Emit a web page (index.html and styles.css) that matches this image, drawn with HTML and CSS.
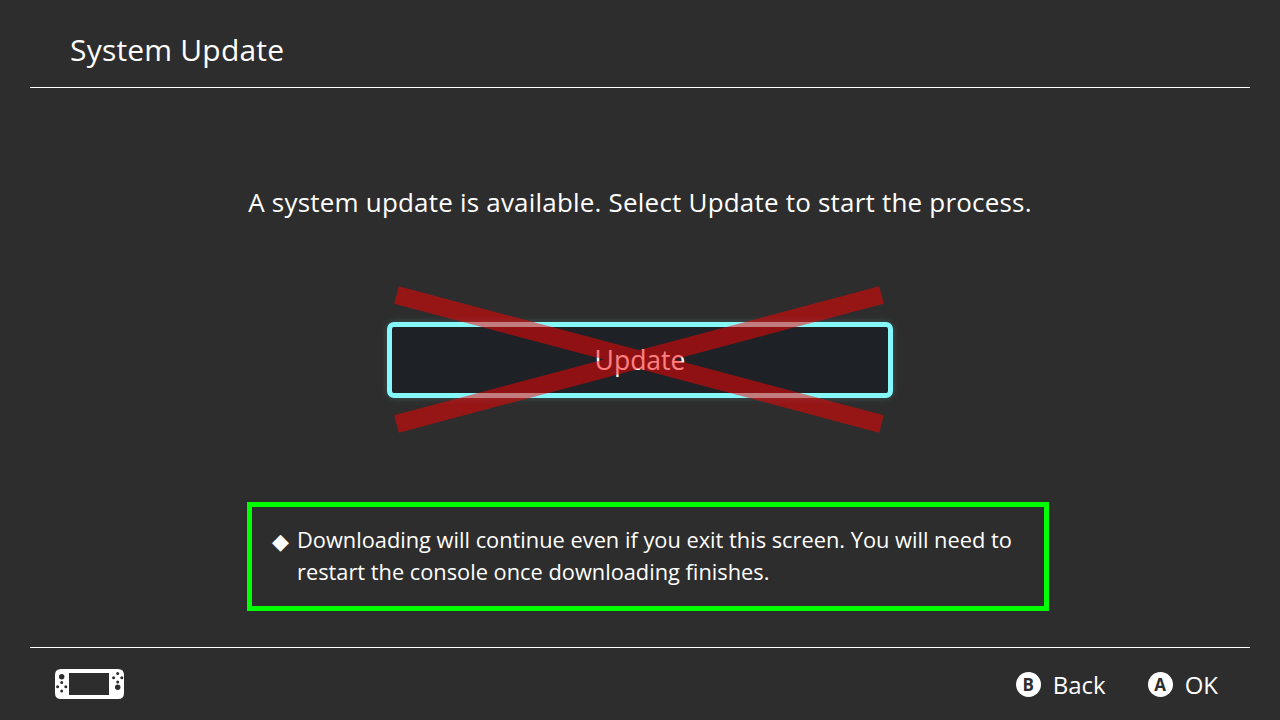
FILE: index.html
```html
<!DOCTYPE html>
<html lang="en">
<head>
    <meta charset="UTF-8">
    <meta name="viewport" content="width=device-width, initial-scale=1.0">
    <title>System Update</title>
    <link rel="stylesheet" href="styles.css">
</head>
<body>
    <header class="top-bar">
        <h1>System Update</h1>
    </header>

    <main class="content">
        <p class="message">A system update is available. Select Update to start the process.</p>

        <div class="button-wrap">
            <button class="update-btn">Update</button>
            <!-- crossed out marks, over the button -->
            <svg class="cross" width="490" height="147" viewBox="0 0 490 147">
                <path d="M2.5 9 L487.5 138 M487.5 9 L2.5 138"/>
            </svg>
        </div>

        <div class="notice">
            <span class="bullet">◆</span>
            <p>Downloading will continue even if you exit this screen. You will need to restart the console once downloading finishes.</p>
        </div>
    </main>

    <footer class="bottom-bar">
        <svg class="console" width="69" height="30" viewBox="0 0 69 30">
            <path fill-rule="evenodd" fill="#fff" d="M6 0 H63 Q69 0 69 6 V24 Q69 30 63 30 H6 Q0 30 0 24 V6 Q0 0 6 0 Z M14 4 V26 H54 V4 Z"/>
            <g fill="#2d2d2d">
                <circle cx="6.7" cy="7.7" r="2.7"/>
                <circle cx="6.7" cy="13.5" r="1.5"/>
                <circle cx="2.6" cy="17.7" r="1.5"/>
                <circle cx="10.8" cy="17.7" r="1.5"/>
                <circle cx="6.7" cy="21.9" r="1.5"/>
                <circle cx="62.7" cy="4.5" r="1.5"/>
                <circle cx="58.6" cy="8.7" r="1.5"/>
                <circle cx="66.8" cy="8.7" r="1.5"/>
                <circle cx="62.7" cy="12.9" r="1.5"/>
                <circle cx="62.7" cy="18.3" r="2.7"/>
            </g>
        </svg>
        <div class="hints">
            <div class="hint"><span class="key">B</span>Back</div>
            <div class="hint"><span class="key">A</span>OK</div>
        </div>
    </footer>
</body>
</html>
```

FILE: styles.css
```css
* {
    margin: 0;
    padding: 0;
    box-sizing: border-box;
}

html, body {
    width: 100%;
    height: 100%;
    overflow: hidden;
}

body {
    display: flex;
    flex-direction: column;
    background-color: #2d2d2d;
    color: #fff;
    font-family: "Open Sans", "Noto Sans", sans-serif;
}

.top-bar {
    height: 88px;
    margin: 0 30px;
    padding: 31px 0 0 40px;
    border-bottom: 1px solid #fff;
}

.top-bar h1 {
    font-size: 30px;
    font-weight: 400;
    line-height: 38px;
    letter-spacing: 0.2px;
}

.content {
    flex: 1;
    display: flex;
    flex-direction: column;
    align-items: center;
}

.message {
    margin-top: 96px;
    font-size: 26px;
    line-height: 36px;
    letter-spacing: 0.2px;
}

.button-wrap {
    position: relative;
    margin-top: 102px;
}

.update-btn {
    display: block;
    width: 506px;
    height: 76px;
    background-color: #1e2227;
    border: 5px solid #85f8fb;
    border-radius: 7px;
    box-shadow: 0 0 6px rgba(133, 248, 251, 0.2);
    color: #fff;
    font-family: inherit;
    font-size: 26.5px;
}

.cross {
    position: absolute;
    left: 7px;
    top: -36px;
}

.cross path {
    fill: none;
    stroke: #f00;
    stroke-opacity: 0.5;
    stroke-width: 18;
}

.notice {
    display: flex;
    width: 802px;
    height: 109px;
    margin: 104px 0 0 16px;
    padding: 17px 20px 0 20px;
    border: 5px solid #00ff00;
    font-size: 21.8px;
    line-height: 32px;
}

.bullet {
    width: 25px;
    flex-shrink: 0;
    font-size: 22px;
}

.bottom-bar {
    display: flex;
    align-items: center;
    justify-content: space-between;
    height: 73px;
    margin: 0 30px;
    padding: 0 32px 0 25px;
    border-top: 1px solid #fff;
}

.hints {
    display: flex;
    gap: 42px;
}

.hint {
    display: flex;
    align-items: center;
    gap: 12px;
    font-size: 24px;
}

.key {
    display: flex;
    align-items: center;
    justify-content: center;
    width: 25px;
    height: 25px;
    border-radius: 50%;
    background-color: #fff;
    color: #2d2d2d;
    font-size: 17px;
    font-weight: 700;
}
```
